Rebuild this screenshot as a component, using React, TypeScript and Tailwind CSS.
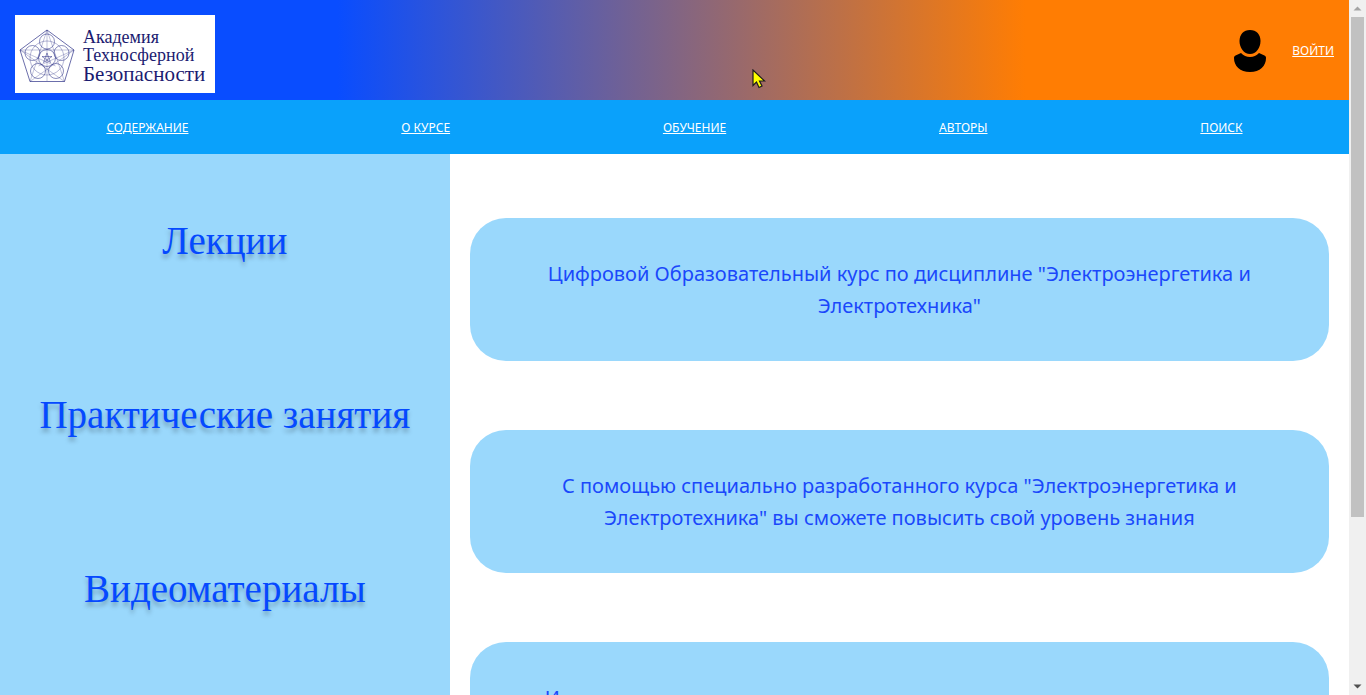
import React from "react";

const navItems = ["СОДЕРЖАНИЕ", "О КУРСЕ", "ОБУЧЕНИЕ", "АВТОРЫ", "ПОИСК"];
const sections = ["Лекции", "Практические занятия", "Видеоматериалы"];
const cards = [
  'Цифровой Образовательный курс по дисциплине "Электроэнергетика и Электротехника"',
  'С помощью специально разработанного курса "Электроэнергетика и Электротехника" вы сможете повысить свой уровень знания',
];

function Emblem() {
  return (
    <svg viewBox="0 0 56 56" className="h-14 w-14 shrink-0" fill="none" stroke="#2b2f86" strokeWidth="0.55" aria-hidden="true">
      <path d="M28 2 55 22 45.500 53.500H11L1 22Z" strokeWidth="0.7" />
      <path d="M28 2 45.500 53.500 1 22H55L11 53.500Z" strokeWidth="0.3" />
      <path d="M28 2V53M55 22 19.500 38M1 22 36.500 38" strokeWidth="0.3" />
      <circle cx="28" cy="30" r="17" strokeWidth="0.35" />
      <circle cx="28" cy="30" r="8.500" />
      <circle cx="28" cy="13.500" r="7.500" />
      <circle cx="42.500" cy="25" r="7.500" />
      <circle cx="13.500" cy="25" r="7.500" />
      <circle cx="19" cy="43" r="7.500" />
      <circle cx="37" cy="43" r="7.500" />
      <path d="m28 25 3.500 9.500-8.500-6h10l-8.500 6Z" strokeWidth="0.5" />
    </svg>
  );
}

function Logo() {
  return (
    <a href="#home" className="flex h-[78px] w-[200px] items-center gap-2 bg-white pt-1 pl-1 text-[#1b1b70]">
      <Emblem />
      <span className="flex flex-col whitespace-nowrap font-['Liberation_Serif',serif]">
        <span className="text-[18px] leading-[18px]">Академия</span>
        <span className="text-[18px] leading-[18px]">Техносферной</span>
        <span className="text-[21px] leading-[21px]">Безопасности</span>
      </span>
    </a>
  );
}

function PersonIcon() {
  return (
    <svg viewBox="0 0 32 44" className="h-11 w-8" fill="#000" aria-hidden="true">
      <path d="M16 1C9.500 1 5.500 5.500 5.500 12c0 6.700 4.300 13 10.500 13s10.500-6.300 10.500-13C26.500 5.500 22.500 1 16 1Z" />
      <path d="M7 24 1.500 26.500C.500 27 0 27.500 0 29c0 8 6 14 16 14s16-6 16-14c0-1.500-.500-2-1.500-2.500L25 24c-2.500 2.800-5.500 4-9 4s-6.500-1.200-9-4Z" />
    </svg>
  );
}

function Scrollbar() {
  return (
    <div className="flex w-[17px] shrink-0 flex-col items-center bg-[#f0f0f0]" aria-hidden="true">
      <svg viewBox="0 0 17 17" className="h-[17px] w-[17px]" fill="#a3a3a3">
        <path d="m8.500 6.500 4 4h-8Z" />
      </svg>
      <div className="w-[13px] flex-[500] bg-[#c1c1c1]" />
      <div className="flex-[161]" />
      <svg viewBox="0 0 17 17" className="h-[17px] w-[17px]" fill="#505050">
        <path d="m8.500 10.500-4-4h8Z" />
      </svg>
    </div>
  );
}

export default function App() {
  return (
    <div className="relative flex h-screen overflow-hidden bg-white font-['Noto_Sans',sans-serif]">
      <div className="min-w-0 flex-1 overflow-hidden">
        <header className="flex h-[100px] items-start justify-between bg-[linear-gradient(90deg,#094dff_25%,#ff7d03_76%)] p-[15px]">
          <Logo />
          <div className="flex h-[71px] items-center gap-[26px] text-white">
            <PersonIcon />
            <a href="#login" className="text-[12px] underline">ВОЙТИ</a>
          </div>
        </header>

        <nav className="flex h-[54px] items-center justify-around bg-[#0aa1fb] pt-0.5 text-[12px] text-white">
          {navItems.map((item) => (
            <a key={item} href="#nav" className="underline">{item}</a>
          ))}
        </nav>

        <div className="flex">
          <aside className="w-1/3 bg-[#9ad8fc]">
            {sections.map((title) => (
              <h2
                key={title}
                className="py-[57px] text-center font-['Liberation_Serif',serif] text-[39px] leading-[60px] text-[#0549ff] [text-shadow:0_4px_4px_rgba(0,0,0,0.25)]"
              >
                {title}
              </h2>
            ))}
          </aside>

          <main className="flex flex-1 flex-col gap-[69px] px-5 pt-16 text-center text-[20px] leading-[32px] text-[#1a48fb]">
            {cards.map((text) => (
              <section key={text} className="flex h-[143px] items-center rounded-[36px] bg-[#9ad8fc] px-[75px]">
                <p className="w-full">{text}</p>
              </section>
            ))}
            <section className="h-[143px] rounded-[36px] bg-[#9ad8fc] px-[75px] py-10 text-left">
              <p>И</p>
            </section>
          </main>
        </div>
      </div>

      <Scrollbar />

      <svg viewBox="0 0 14 20" className="absolute top-[69px] left-[752px] h-5 w-3.5" fill="#ff0" stroke="#1c1c1c" strokeWidth="1.200" aria-hidden="true">
        <path d="M1 1v15.500l3.500-3.500 2.500 5.500 3-1.500-2.500-5H12.500Z" />
      </svg>
    </div>
  );
}
